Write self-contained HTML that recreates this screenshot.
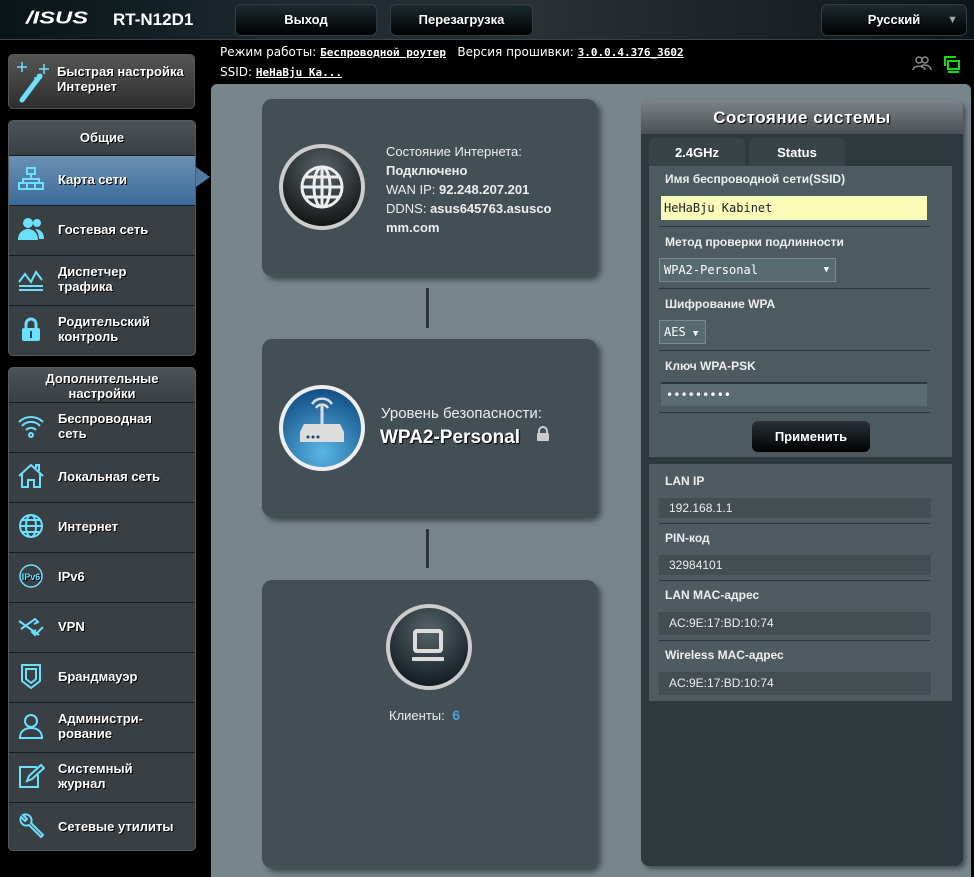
<!DOCTYPE html>
<html><head><meta charset="utf-8"><style>
*{box-sizing:border-box;margin:0;padding:0}
html,body{width:974px;height:877px;overflow:hidden}
body{background:#000;font-family:"Liberation Sans",sans-serif;color:#fff;position:relative;font-size:13px}
.a{position:absolute}
.hdr{left:0;top:0;width:974px;height:40px;background:linear-gradient(90deg,#0a1418,#1d2a30 30%,#2a3034 55%,#1a2226 80%,#0d1418);border-bottom:1px solid #3a4448}
.btn{background:linear-gradient(#1e2a30,#000);border:1px solid #333d42;border-radius:6px;font-weight:bold;font-size:13px;text-align:center;line-height:30px;text-shadow:1px 1px 0 #000}
.info{font-family:"DejaVu Sans",sans-serif;font-size:12px;color:#fff}
.info b{text-decoration:underline;font-family:"DejaVu Sans Mono",monospace;font-size:11px}
.panel{background:#3a3f43;border:1px solid #555c60;border-radius:5px}
.item{position:absolute;left:0;width:187px;height:50px;border-top:1px solid #1a1d1f;font-weight:bold;font-size:13px;display:flex;align-items:center;padding-left:49px;padding-bottom:3px;line-height:15px;text-shadow:1px 1px 0 #000}
.ico{position:absolute;left:8px;top:10px;width:28px;height:26px}
.main{left:211px;top:84px;width:760px;height:793px;background:#78868c;border-radius:6px 6px 0 0}
.card{background:#444f55;border-radius:10px;box-shadow:4px 4px 6px rgba(0,0,0,.45)}
.line{width:3px;background:#2e3639}
.lab{font-weight:bold;font-size:12px;color:#eee;position:absolute;left:16px}
.sep{position:absolute;left:10px;width:271px;height:1px;background:#2c3538}
.val{position:absolute;left:10px;width:272px;height:20px;background:#434d52;font-size:12px;color:#eee;padding-left:10px;line-height:20px}
</style></head><body>
<div class="a hdr"></div>
<div class="a" style="left:26px;top:8px;font:italic bold 22px 'Liberation Sans',sans-serif;color:#fff;transform:scale(1.08,0.78);transform-origin:left top">/ISUS</div>
<div class="a" style="left:113px;top:10px;font-weight:bold;font-size:17px">RT-N12D1</div>
<div class="a btn" style="left:235px;top:4px;width:142px;height:32px">Выход</div>
<div class="a btn" style="left:390px;top:4px;width:143px;height:32px">Перезагрузка</div>
<div class="a btn" style="left:821px;top:4px;width:146px;height:32px">Русский<span style="position:absolute;right:8px;color:#9aa;font-size:11px">▼</span></div>
<div class="a info" style="left:220px;top:45px">Режим работы: <b>Беспроводной роутер</b> &nbsp; Версия прошивки: <b>3.0.0.4.376_3602</b></div>
<div class="a info" style="left:220px;top:65px">SSID: <b>HeHaBju Ka...</b></div>
<svg class="a" style="left:912px;top:55px" width="20" height="16"><g fill="none" stroke="#888" stroke-width="1.5"><circle cx="7" cy="5" r="3"/><circle cx="13" cy="5" r="3"/><path d="M1 15c0-5 12-5 12 0M9 11c3-2 10-1 10 4"/></g></svg>
<svg class="a" style="left:943px;top:55px" width="18" height="18"><g fill="none" stroke="#1d1" stroke-width="2"><rect x="5" y="6" width="11" height="8"/><path d="M2 11V2h11M5 17h11"/></g></svg>

<div class="a" style="left:8px;top:54px;width:187px;height:55px;background:linear-gradient(#555,#2e2e2e);border:1px solid #555;border-radius:5px"></div>
<svg class="a" style="left:14px;top:58px" width="38" height="46"><path d="M8 42L26 18" stroke="#6ce0ff" stroke-width="5" stroke-linecap="round"/><g stroke="#6ce0ff" stroke-width="1.5"><path d="M8 4v10M3 9h10M30 6v10M25 11h10M24 16v8M20 20h8"/></g></svg>
<div class="a" style="left:57px;top:64px;font-weight:bold;font-size:13px;line-height:15px;text-shadow:1px 1px 0 #000">Быстрая настройка<br>Интернет</div>

<div class="a panel" style="left:8px;top:120px;width:188px;height:236px;overflow:hidden">
<div style="height:35px;background:linear-gradient(#4c5256,#3a3f43);text-align:center;line-height:34px;font-weight:bold;text-shadow:1px 1px 0 #000">Общие</div>
<div class="item" style="top:34px;background:linear-gradient(#6c91b4,#3a6a99)"><svg class="ico" viewBox="0 0 28 26"><g fill="none" stroke="#6ce0ff" stroke-width="2"><rect x="10" y="2" width="8" height="6"/><rect x="2" y="17" width="8" height="6"/><rect x="18" y="17" width="8" height="6"/><rect x="10" y="17" width="8" height="6"/><path d="M14 8v5M6 17v-4h16v4"/></g></svg>Карта сети</div>
<div class="item" style="top:84px"><svg class="ico" viewBox="0 0 28 26"><g fill="#6ce0ff"><circle cx="11" cy="7" r="5"/><circle cx="20" cy="7" r="4"/><path d="M1 24c0-8 6-11 10-11s10 3 10 11zM18 13c5 0 9 3 9 10h-5c0-5-2-8-4-10z"/></g></svg>Гостевая сеть</div>
<div class="item" style="top:134px"><svg class="ico" viewBox="0 0 28 26"><g fill="none" stroke="#6ce0ff" stroke-width="2"><path d="M2 16l6-8 6 8 5-10 6 8M2 20h24M2 24h24"/></g></svg>Диспетчер<br>трафика</div>
<div class="item" style="top:184px"><svg class="ico" viewBox="0 0 28 26"><path d="M9 12V8a5 5 0 0110 0v4" fill="none" stroke="#6ce0ff" stroke-width="3"/><rect x="5" y="12" width="18" height="13" rx="2" fill="#6ce0ff"/><rect x="13" y="15" width="2" height="7" fill="#246"/></svg>Родительский<br>контроль</div>
</div>
<svg class="a" style="left:196px;top:167px" width="14" height="20"><path d="M0 0L14 10L0 20z" fill="#4f7aa3"/></svg>

<div class="a panel" style="left:8px;top:367px;width:188px;height:484px;overflow:hidden">
<div style="height:35px;background:linear-gradient(#4c5256,#3a3f43);text-align:center;line-height:15px;padding-top:3px;font-weight:bold;text-shadow:1px 1px 0 #000">Дополнительные<br>настройки</div>
<div class="item" style="top:34px"><svg class="ico" viewBox="0 0 28 26"><g fill="none" stroke="#6ce0ff" stroke-width="2"><path d="M2 9a17 17 0 0124 0M5 13a12 12 0 0118 0M9 17a7 7 0 0110 0"/><circle cx="14" cy="22" r="2"/></g></svg>Беспроводная<br>сеть</div>
<div class="item" style="top:84px"><svg class="ico" viewBox="0 0 28 26"><path d="M2 13L14 2l12 11M5 11v13h6v-7h6v7h6V11M19 5V2h3v6" fill="none" stroke="#6ce0ff" stroke-width="2"/></svg>Локальная сеть</div>
<div class="item" style="top:134px"><svg class="ico" viewBox="0 0 28 26"><g fill="none" stroke="#6ce0ff" stroke-width="2"><circle cx="14" cy="13" r="11"/><ellipse cx="14" cy="13" rx="5" ry="11"/><path d="M3 13h22M5 7h18M5 19h18"/></g></svg>Интернет</div>
<div class="item" style="top:184px"><svg class="ico" viewBox="0 0 28 26"><g fill="none" stroke="#6ce0ff" stroke-width="1.5"><circle cx="14" cy="13" r="11"/></g><text x="14" y="17" font-size="9" font-weight="bold" fill="#6ce0ff" text-anchor="middle" font-family="Liberation Sans">IPv6</text></svg>IPv6</div>
<div class="item" style="top:234px"><svg class="ico" viewBox="0 0 28 26"><path d="M2 8l20 14M4 16l14-10 3 3-4 2M26 14l-8 8-3-3 4-2" fill="none" stroke="#6ce0ff" stroke-width="2"/></svg>VPN</div>
<div class="item" style="top:284px"><svg class="ico" viewBox="0 0 28 26"><path d="M5 2h18v16l-9 7-9-7z M9 6h10v10l-5 4-5-4z" fill="none" stroke="#6ce0ff" stroke-width="2"/></svg>Брандмауэр</div>
<div class="item" style="top:334px"><svg class="ico" viewBox="0 0 28 26"><g fill="none" stroke="#6ce0ff" stroke-width="2"><circle cx="14" cy="8" r="6"/><path d="M3 25c0-7 5-10 11-10s11 3 11 10z"/></g></svg>Администри-<br>рование</div>
<div class="item" style="top:384px"><svg class="ico" viewBox="0 0 28 26"><g fill="none" stroke="#6ce0ff" stroke-width="2"><path d="M20 4H3v20h18V12"/><path d="M10 18l2-5 12-11 3 3-12 11z"/></g></svg>Системный<br>журнал</div>
<div class="item" style="top:434px"><svg class="ico" viewBox="0 0 28 26"><path d="M4 4a6 6 0 008 8l12 12 2-2-12-12a6 6 0 00-8-8l4 4-2 2z" fill="none" stroke="#6ce0ff" stroke-width="2"/></svg>Сетевые утилиты</div>
</div>

<div class="a main"></div>
<div class="a line" style="left:426px;top:288px;height:40px"></div>
<div class="a line" style="left:426px;top:529px;height:39px"></div>

<div class="a card" style="left:262px;top:99px;width:335px;height:177px"></div>
<svg class="a" style="left:278px;top:143px" width="88" height="88"><defs><radialGradient id="g1" cx=".5" cy=".3" r=".7"><stop offset="0" stop-color="#5a666c"/><stop offset="1" stop-color="#111"/></radialGradient></defs><circle cx="44" cy="44" r="41" fill="url(#g1)" stroke="#ccc" stroke-width="4"/><g fill="none" stroke="#eee" stroke-width="3"><circle cx="44" cy="44" r="20"/><ellipse cx="44" cy="44" rx="8" ry="20"/><path d="M24 44h40M28 34h32M28 54h32M44 24v40"/></g></svg>
<div class="a" style="left:386px;top:142px;font-size:13px;line-height:19px;color:#eee">Состояние Интернета:<br><b>Подключено</b><br>WAN IP: <b>92.248.207.201</b><br>DDNS: <b>asus645763.asusco<br>mm.com</b></div>

<div class="a card" style="left:262px;top:339px;width:335px;height:178px"></div>
<svg class="a" style="left:278px;top:384px" width="88" height="88"><defs><radialGradient id="g2" cx=".5" cy=".8" r=".8"><stop offset="0" stop-color="#5ab6e6"/><stop offset="1" stop-color="#0f4c82"/></radialGradient></defs><circle cx="44" cy="44" r="41" fill="url(#g2)" stroke="#eee" stroke-width="4"/><path d="M22 48h44l-4-8H26z M22 48h44v10H22z" fill="#ddd"/><path d="M44 40V22" stroke="#ddd" stroke-width="3"/><g fill="none" stroke="#ddd" stroke-width="2.5"><path d="M38 24a7 7 0 0112 0M34 20a12 12 0 0120 0"/></g><g fill="#246"><circle cx="30" cy="53" r="1.5"/><circle cx="35" cy="53" r="1.5"/><circle cx="40" cy="53" r="1.5"/></g></svg>
<div class="a" style="left:381px;top:405px;font-size:15px;color:#eee">Уровень безопасности:</div>
<div class="a" style="left:380px;top:427px;font-size:19px;font-weight:bold;text-shadow:1px 1px 1px #000">WPA2-Personal</div>
<svg class="a" style="left:536px;top:426px" width="14" height="15"><path d="M3 7V5a4 4 0 018 0v2" fill="none" stroke="#ccc" stroke-width="2"/><rect x="1" y="7" width="12" height="8" rx="1" fill="#ccc"/></svg>

<div class="a card" style="left:262px;top:580px;width:335px;height:288px"></div>
<svg class="a" style="left:385px;top:603px" width="88" height="88"><defs><radialGradient id="g3" cx=".5" cy=".3" r=".7"><stop offset="0" stop-color="#56646a"/><stop offset="1" stop-color="#0f1a1f"/></radialGradient></defs><circle cx="44" cy="44" r="41" fill="url(#g3)" stroke="#ccc" stroke-width="4"/><rect x="30" y="28" width="26" height="20" rx="2" fill="none" stroke="#ddd" stroke-width="4"/><rect x="27" y="54" width="32" height="4" rx="1" fill="#ddd"/></svg>
<div class="a" style="left:389px;top:707px;font-size:13px;color:#eee">Клиенты: <b style="color:#4aa3df;font-size:14px">&nbsp;6</b></div>

<div class="a" style="left:641px;top:100px;width:322px;height:766px;background:#2e383d;border-radius:8px;box-shadow:3px 3px 5px rgba(0,0,0,.4)"></div>
<div class="a" style="left:641px;top:100px;width:322px;height:34px;background:linear-gradient(#7d8488,#4a5054);border-radius:8px 8px 0 0;text-align:center;line-height:36px;font-weight:bold;font-size:17px;letter-spacing:.5px;text-shadow:1px 1px 1px #000">Состояние системы</div>
<div class="a" style="left:649px;top:138px;width:96px;height:28px;background:#384347;border-radius:6px 6px 0 0;text-align:center;line-height:30px;font-weight:bold;font-size:13px">2.4GHz</div>
<div class="a" style="left:749px;top:138px;width:96px;height:28px;background:#384347;border-radius:6px 6px 0 0;text-align:center;line-height:30px;font-weight:bold;font-size:13px">Status</div>
<div class="a" style="left:649px;top:166px;width:303px;height:291px;background:#4d5a5f">
<div class="lab" style="top:6px">Имя беспроводной сети(SSID)</div>
<div class="a" style="left:12px;top:30px;width:266px;height:24px;background:#fbfbb9;color:#222;font:12px 'DejaVu Sans Mono',monospace;line-height:24px;padding-left:3px">HeHaBju Kabinet</div>
<div class="sep" style="top:60px"></div>
<div class="lab" style="top:69px">Метод проверки подлинности</div>
<div class="a" style="left:10px;top:92px;width:177px;height:24px;border:1px solid #7b878c;background:#576a70;font:12px 'DejaVu Sans Mono',monospace;line-height:22px;padding-left:4px">WPA2-Personal<span style="position:absolute;right:6px;font-size:9px">▼</span></div>
<div class="sep" style="top:122px"></div>
<div class="lab" style="top:131px">Шифрование WPA</div>
<div class="a" style="left:10px;top:154px;width:47px;height:24px;border:1px solid #7b878c;background:#576a70;font:12px 'DejaVu Sans Mono',monospace;line-height:22px;padding-left:4px">AES <span style="font-size:9px">▼</span></div>
<div class="sep" style="top:184px"></div>
<div class="lab" style="top:193px">Ключ WPA-PSK</div>
<div class="a" style="left:12px;top:216px;width:266px;height:24px;border-top:2px solid #2e383d;background:#5b6b72;font:12px 'DejaVu Sans Mono',monospace;line-height:22px;padding-left:5px">•••••••••</div>
<div class="sep" style="top:246px"></div>
<div class="a" style="left:103px;top:255px;width:118px;height:31px;background:linear-gradient(#2a3236,#000);border-radius:6px;text-align:center;line-height:31px;font-weight:bold;font-size:13px">Применить</div>
</div>
<div class="a" style="left:649px;top:464px;width:303px;height:237px;background:#4f5b60">
<div class="lab" style="top:10px">LAN IP</div>
<div class="val" style="top:34px">192.168.1.1</div>
<div class="sep" style="top:59px"></div>
<div class="lab" style="top:67px">PIN-код</div>
<div class="val" style="top:91px">32984101</div>
<div class="sep" style="top:116px"></div>
<div class="lab" style="top:124px">LAN MAC-адрес</div>
<div class="val" style="top:148px;height:23px;line-height:23px">AC:9E:17:BD:10:74</div>
<div class="sep" style="top:176px"></div>
<div class="lab" style="top:184px">Wireless MAC-адрес</div>
<div class="val" style="top:208px;height:23px;line-height:23px">AC:9E:17:BD:10:74</div>
</div>
</body></html>
